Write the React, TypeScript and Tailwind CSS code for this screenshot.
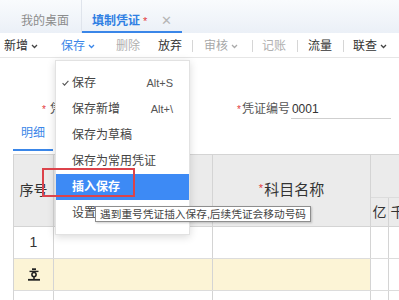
import React from "react";

const Chevron = ({ color = "#666" }: { color?: string }) => (
  <svg width="7" height="5" viewBox="0 0 7 5" className="ml-[3px] shrink-0">
    <path d="M1 1l2.5 2.5L6 1" fill="none" stroke={color} strokeWidth="1.3" />
  </svg>
);

const Sep = ({ ml }: { ml: string }) => <span className={`${ml} w-px h-[12px] bg-[#d6d6d6] shrink-0`} />;

const digits = ["亿", "千"];

const menuItems = [
  { label: "保存", key: "Alt+S", check: true },
  { label: "保存新增", key: "Alt+\\" },
  { label: "保存为草稿" },
  { label: "保存为常用凭证" },
  { label: "插入保存", active: true },
  { label: "设置" },
];

function InsertIcon() {
  return (
    <svg width="12" height="13" viewBox="0 0 12 13">
      <path d="M4 1.2h4" stroke="#222" strokeWidth="1.8" />
      <path d="M1.5 3.4h9" stroke="#222" strokeWidth="1.4" />
      <circle cx="6" cy="6.6" r="2.1" fill="none" stroke="#222" strokeWidth="1.6" />
      <path d="M6 8.8v2.2" stroke="#222" strokeWidth="1.6" />
      <path d="M0 11.8h12" stroke="#222" strokeWidth="1.8" />
    </svg>
  );
}

function DigitCells({ header }: { header?: boolean }) {
  return (
    <>
      {digits.map((d, i) => (
        <div
          key={i}
          className={`w-[18px] shrink-0 border-r ${i === 0 ? "border-[#d4d4d4]" : "border-[#e2e2e2]"} ${header ? "flex items-center justify-center text-[14px] text-[#333]" : "bg-white"}`}
        >
          {header ? d : null}
        </div>
      ))}
      <div className={`w-[40px] shrink-0 ${header ? "" : "bg-white"}`} />
    </>
  );
}

export default function App() {
  return (
    <div className="relative w-[399px] h-[300px] overflow-hidden bg-white font-['Liberation_Sans','Noto_Sans_CJK_SC',sans-serif] text-[#333]">
      {/* Tabs */}
      <div className="h-[33px] flex bg-gradient-to-b from-[#f9fbfd] to-[#ebf0f7]">
        <div className="w-[82px] pl-[21px] pt-[13px] text-[12px] leading-[16px] text-[#8c8c8c] border-r border-[#dfe4ec]">我的桌面</div>
        <div className="w-[100px] pl-[10px] pt-[13px] flex items-start text-[12px] leading-[16px] border-b-2 border-[#3a86e8]">
          <span className="text-[#2f7fe3] font-bold">填制凭证</span>
          <span className="text-[#e4393c] ml-[3px] text-[11px]">*</span>
          <span className="ml-[14px] text-[#b5b5b5] text-[13px] leading-[16px]">✕</span>
        </div>
      </div>

      {/* Toolbar */}
      <div className="h-[25px] pt-[2px] flex items-center text-[12px] border-b border-[#e6e6e6] whitespace-nowrap">
        <span className="ml-[4px] flex items-center">新增<Chevron color="#444" /></span>
        <span className="ml-[23px] flex items-center text-[#3a86e8]">保存<Chevron color="#3a86e8" /></span>
        <span className="ml-[21px] text-[#b0b0b0]">删除</span>
        <span className="ml-[18px]">放弃</span>
        <Sep ml="ml-[10px]" />
        <span className="ml-[11px] flex items-center text-[#a8a8a8]">审核<Chevron color="#aaa" /></span>
        <Sep ml="ml-[14px]" />
        <span className="ml-[9px] text-[#b0b0b0]">记账</span>
        <Sep ml="ml-[11px]" />
        <span className="ml-[10px]">流量</span>
        <Sep ml="ml-[11px]" />
        <span className="ml-[9px] flex items-center">联查<Chevron color="#444" /></span>
      </div>

      {/* Form */}
      <div className="mt-[41px] h-[20px] flex items-center text-[12px] whitespace-nowrap">
        <div className="w-[237px] shrink-0 pl-[42px] flex items-center">
          <span className="text-[#e4393c] text-[10px]">*</span>
          <span className="ml-[4px] text-[#555]">凭</span>
        </div>
        <span className="text-[#e4393c] text-[10px]">*</span>
        <span className="ml-[1px] text-[#555]">凭证编号</span>
        <div className="ml-[1px] w-[100px] h-[20px] border-b border-[#cfcfcf] flex items-center pl-[1px] text-[#333]">0001</div>
      </div>

      <div className="mt-[4px] ml-[13px] w-[40px] h-[28px] pt-[2px] flex justify-center text-[12px] leading-[16px] text-[#3a86e8] border-b-2 border-[#3a86e8]">明细</div>

      {/* Table */}
      <div className="mt-[3px] ml-[13px] border-l border-t border-[#d4d4d4] w-max">
        <div className="flex h-[72px] bg-[#ebebeb] border-b border-[#d4d4d4]">
          <div className="w-[40px] shrink-0 border-r border-[#d4d4d4] flex items-center justify-center text-[14px]">序号</div>
          <div className="w-[159px] shrink-0 border-r border-[#d4d4d4]" />
          <div className="w-[158px] shrink-0 border-r border-[#d4d4d4] flex items-center justify-center text-[15px]">
            <span className="text-[#e4393c] text-[11px] self-start mt-[25px] mr-[1px]">*</span>科目名称
          </div>
          <div className="flex flex-col shrink-0">
            <div className="h-[43px] border-b border-[#dcdcdc]" />
            <div className="flex h-[28px]"><DigitCells header /></div>
          </div>
        </div>
        {[0, 1, 2].map((r) => (
          <div key={r} className={`flex h-[32px] border-b border-[#dcdcdc] ${r === 1 ? "bg-[#fcf4d6]" : "bg-white"}`}>
            <div className="w-[40px] shrink-0 border-r border-[#d4d4d4] flex items-center justify-center text-[14px]">
              {r === 0 ? "1" : r === 1 ? <InsertIcon /> : null}
            </div>
            <div className="w-[159px] shrink-0 border-r border-[#d4d4d4]" />
            <div className="w-[158px] shrink-0 border-r border-[#d4d4d4]" />
            <div className="flex shrink-0"><DigitCells /></div>
          </div>
        ))}
      </div>

      {/* Save dropdown */}
      <div className="absolute left-[55px] top-[60px] w-[135px] h-[175px] bg-white border border-[#e2e2e2] shadow-[0_2px_8px_rgba(0,0,0,0.15)] pt-[9px] text-[12px] whitespace-nowrap">
        {menuItems.map((m) => (
          <div
            key={m.label}
            className={`h-[26px] flex items-center pl-[6px] pr-[16px] ${m.active ? "bg-[#3d8af5] text-white font-bold" : "text-[#444]"}`}
          >
            <span className="w-[10px] shrink-0">
              {m.check ? (
                <svg width="7" height="6" viewBox="0 0 7 6">
                  <path d="M0.6 3.2l1.9 1.9L6.4 0.8" fill="none" stroke="#555" strokeWidth="1.1" />
                </svg>
              ) : null}
            </span>
            <span>{m.label}</span>
            {m.key ? <span className="ml-auto text-[11px] text-[#555]">{m.key}</span> : null}
          </div>
        ))}
      </div>

      {/* Tooltip */}
      <div className="absolute left-[95px] top-[206px] h-[16px] px-[4px] bg-white border border-[#8e8e8e] shadow-[1px_1px_2px_rgba(0,0,0,0.2)] text-[10.7px] leading-[14px] text-[#444] whitespace-nowrap">
        遇到重号凭证插入保存,后续凭证会移动号码
      </div>

      {/* Highlight box */}
      <div className="absolute left-[42px] top-[168px] w-[93px] h-[29px] border-2 border-[#dc434b]" />
    </div>
  );
}
